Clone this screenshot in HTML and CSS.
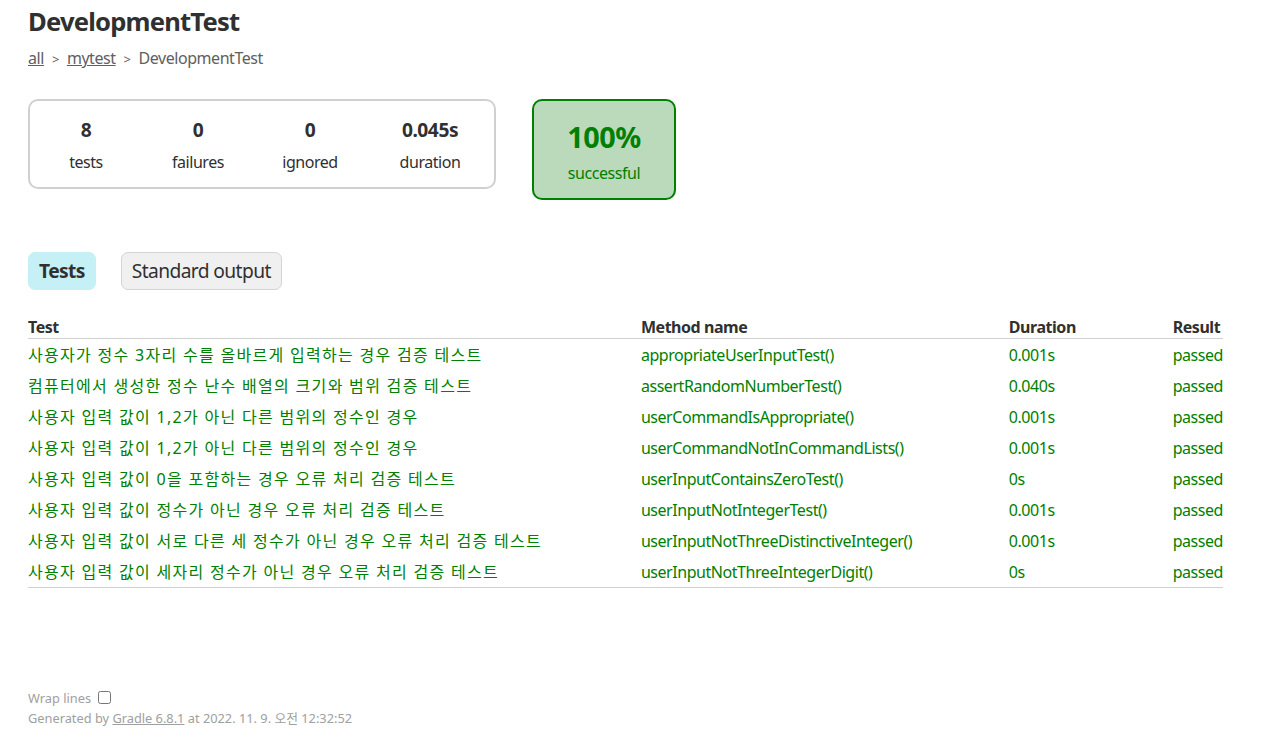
FILE: index.html
```html
<!DOCTYPE html>
<html lang="ko">
<head>
    <meta charset="UTF-8">
    <title>Test results - Class DevelopmentTest</title>
    <link rel="stylesheet" href="styles.css">
</head>
<body>
<div id="content">
    <h1>DevelopmentTest</h1>
    <div class="breadcrumbs">
        <a href="#">all</a><span class="sep">&gt;</span><a href="#">mytest</a><span class="sep">&gt;</span>DevelopmentTest
    </div>

    <div id="summary">
        <div class="summaryGroup">
            <div class="infoBox" id="tests">
                <div class="counter">8</div>
                <p>tests</p>
            </div>
            <div class="infoBox" id="failures">
                <div class="counter">0</div>
                <p>failures</p>
            </div>
            <div class="infoBox" id="ignored">
                <div class="counter">0</div>
                <p>ignored</p>
            </div>
            <div class="infoBox" id="duration">
                <div class="counter">0.045s</div>
                <p>duration</p>
            </div>
        </div>
        <div class="infoBox success" id="successRate">
            <div class="percent">100%</div>
            <p>successful</p>
        </div>
    </div>

    <ul class="tabLinks">
        <li class="selected"><a href="#"><h2>Tests</h2></a></li>
        <li><a href="#">Standard output</a></li>
    </ul>

    <div class="tab">
        <table>
            <thead>
                <tr>
                    <th class="col-test">Test</th>
                    <th class="col-method">Method name</th>
                    <th class="col-duration">Duration</th>
                    <th class="col-result">Result</th>
                </tr>
            </thead>
            <tbody>
                <tr>
                    <td class="success test-name">사용자가 정수 3자리 수를 올바르게 입력하는 경우 검증 테스트</td>
                    <td class="success">appropriateUserInputTest()</td>
                    <td class="success">0.001s</td>
                    <td class="success">passed</td>
                </tr>
                <tr>
                    <td class="success test-name">컴퓨터에서 생성한 정수 난수 배열의 크기와 범위 검증 테스트</td>
                    <td class="success">assertRandomNumberTest()</td>
                    <td class="success">0.040s</td>
                    <td class="success">passed</td>
                </tr>
                <tr>
                    <td class="success test-name">사용자 입력 값이 1,2가 아닌 다른 범위의 정수인 경우</td>
                    <td class="success">userCommandIsAppropriate()</td>
                    <td class="success">0.001s</td>
                    <td class="success">passed</td>
                </tr>
                <tr>
                    <td class="success test-name">사용자 입력 값이 1,2가 아닌 다른 범위의 정수인 경우</td>
                    <td class="success">userCommandNotInCommandLists()</td>
                    <td class="success">0.001s</td>
                    <td class="success">passed</td>
                </tr>
                <tr>
                    <td class="success test-name">사용자 입력 값이 0을 포함하는 경우 오류 처리 검증 테스트</td>
                    <td class="success">userInputContainsZeroTest()</td>
                    <td class="success">0s</td>
                    <td class="success">passed</td>
                </tr>
                <tr>
                    <td class="success test-name">사용자 입력 값이 정수가 아닌 경우 오류 처리 검증 테스트</td>
                    <td class="success">userInputNotIntegerTest()</td>
                    <td class="success">0.001s</td>
                    <td class="success">passed</td>
                </tr>
                <tr>
                    <td class="success test-name">사용자 입력 값이 서로 다른 세 정수가 아닌 경우 오류 처리 검증 테스트</td>
                    <td class="success">userInputNotThreeDistinctiveInteger()</td>
                    <td class="success">0.001s</td>
                    <td class="success">passed</td>
                </tr>
                <tr>
                    <td class="success test-name">사용자 입력 값이 세자리 정수가 아닌 경우 오류 처리 검증 테스트</td>
                    <td class="success">userInputNotThreeIntegerDigit()</td>
                    <td class="success">0s</td>
                    <td class="success">passed</td>
                </tr>
            </tbody>
        </table>
    </div>

    <div id="footer">
        <p>
            <label for="line-wrapping-toggle" id="label-for-line-wrapping-toggle">Wrap lines</label>
            <input id="line-wrapping-toggle" type="checkbox" autocomplete="off">
        </p>
        <p>Generated by <a href="#">Gradle 6.8.1</a> at 2022. 11. 9. 오전 12:32:52</p>
    </div>
</div>
</body>
</html>
```

FILE: styles.css
```css
body {
    margin: 0;
    padding: 0;
    font-family: "Noto Sans", "Noto Sans CJK KR", sans-serif;
    font-size: 16px;
    letter-spacing: -0.45px;
    color: #303030;
}

a, a:visited {
    color: #303030;
}

#content {
    padding: 0 28px;
}

#content h1 {
    font-size: 25.6px;
    line-height: 35px;
    letter-spacing: -0.8px;
    margin: 4px 0 8px;
    white-space: nowrap;
}

.breadcrumbs, .breadcrumbs a {
    color: #606060;
    line-height: 22px;
}

.breadcrumbs .sep {
    font-size: 13px;
    line-height: 1;
    margin: 0 8px;
}

#summary {
    margin-top: 30px;
    margin-bottom: 52px;
    display: flex;
    align-items: flex-start;
}

.summaryGroup {
    display: flex;
}

#successRate, .summaryGroup {
    border: solid 2px #d0d0d0;
    border-radius: 10px;
}

.infoBox {
    width: 112px;
    padding-top: 16px;
    padding-bottom: 14px;
    text-align: center;
}

.infoBox p {
    margin: 0;
    line-height: 22px;
}

.counter, .percent {
    font-size: 19.2px;
    line-height: 26px;
    font-weight: bold;
    margin-bottom: 8px;
}

#duration {
    width: 128px;
}

#successRate {
    width: 140px;
    margin-left: 36px;
}

#successRate .percent {
    font-size: 28.8px;
    line-height: 39px;
    margin-bottom: 6px;
}

.success, .success a {
    color: #008000;
}

div.success, #successRate.success {
    background-color: #bbd9bb;
    border-color: #008000;
}

ul.tabLinks {
    display: flex;
    gap: 25px;
    padding: 0;
    margin: 0 0 27px;
}

ul.tabLinks li {
    list-style: none;
    padding: 5px 10px;
    border: solid 1px #d4d4d4;
    border-radius: 7px;
    background-color: #f0f0f0;
}

ul.tabLinks li.selected {
    background-color: #c5f0f5;
    border-color: #c5f0f5;
}

ul.tabLinks a {
    font-size: 19.2px;
    line-height: 26px;
    letter-spacing: -0.6px;
    display: block;
    text-decoration: none;
}

ul.tabLinks li h2 {
    margin: 0;
    padding: 0;
    font-size: 19.2px;
    line-height: 26px;
}

div.tab table {
    border-collapse: collapse;
    width: 1195px;
    border-bottom: solid #d0d0d0 1px;
}

div.tab th {
    text-align: left;
    white-space: nowrap;
    padding: 0;
    line-height: 21px;
    border-bottom: solid #d0d0d0 1px;
}

div.tab td {
    white-space: nowrap;
    padding: 6px 0 4px;
    line-height: 21px;
}

div.tab td.test-name {
    letter-spacing: 1.3px;
}

.col-test {
    width: 613px;
}

.col-method {
    width: 368px;
}

.col-duration {
    width: 164px;
}

#footer {
    margin-top: 98px;
    font-size: 12.8px;
    letter-spacing: 0;
    white-space: nowrap;
}

#footer p {
    margin: 0;
    line-height: 20px;
}

#footer, #footer a {
    color: #a0a0a0;
}

#line-wrapping-toggle {
    vertical-align: middle;
    width: 13px;
    height: 13px;
    margin: 0 0 0 4px;
}

#label-for-line-wrapping-toggle {
    vertical-align: middle;
}
```
